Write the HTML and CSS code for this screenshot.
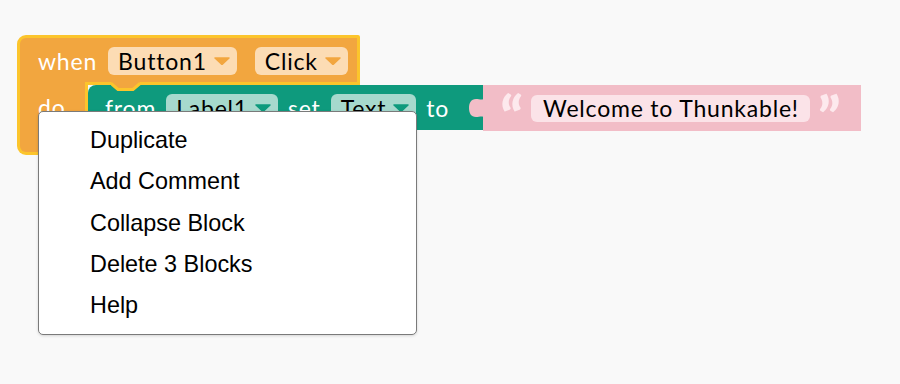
FILE: index.html
```html
<!DOCTYPE html>
<html lang="en">
<head>
    <meta charset="UTF-8">
    <title>Blocks Workspace</title>
    <link rel="stylesheet" href="styles.css">
</head>
<body>
<div class="workspace">

    <!-- event block: when Button1 Click -->
    <div class="event">
        <div class="event-head">
            <span class="label">when</span>
            <span class="pill pill-orange">Button1
                <svg class="caret" width="16" height="8" viewBox="0 0 16 8"><path d="M1 1 H15 L8 7.5 Z" fill="#f2a63f" stroke="#f2a63f" stroke-linejoin="round" stroke-width="1.5"/></svg>
            </span>
            <span class="pill pill-orange pill-click">Click
                <svg class="caret" width="16" height="8" viewBox="0 0 16 8"><path d="M1 1 H15 L8 7.5 Z" fill="#f2a63f" stroke="#f2a63f" stroke-linejoin="round" stroke-width="1.5"/></svg>
            </span>
        </div>
        <div class="event-body">
            <div class="event-do"><span class="label">do</span></div>
            <div class="stack">
                <!-- set block -->
                <div class="set-block">
                    <svg class="notch" width="30" height="10" viewBox="0 0 30 10">
                        <path d="M0 0 L7 7.5 H22 L29 0 Z" fill="#f2a63f"/>
                        <path d="M0 1.5 L7 7.5 H22 L29 1.5" fill="none" stroke="#fcc52c" stroke-width="3"/>
                    </svg>
                    <span class="label">from</span>
                    <span class="pill pill-teal">Label1
                        <svg class="caret" width="16" height="8" viewBox="0 0 16 8"><path d="M1 1 H15 L8 7.5 Z" fill="#0e9a7d" stroke="#0e9a7d" stroke-linejoin="round" stroke-width="1.5"/></svg>
                    </span>
                    <span class="label">set</span>
                    <span class="pill pill-teal">Text
                        <svg class="caret" width="16" height="8" viewBox="0 0 16 8"><path d="M1 1 H15 L8 7.5 Z" fill="#0e9a7d" stroke="#0e9a7d" stroke-linejoin="round" stroke-width="1.5"/></svg>
                    </span>
                    <span class="label">to</span>
                </div>
                <!-- text block -->
                <div class="text-block">
                    <svg class="tab" width="15" height="26" viewBox="0 0 15 26">
                        <path d="M15 0 V2 C15 6 11 4 7 4 C2 4 0 8 0 13 C0 18 2 22 7 22 C11 22 15 20 15 24 V26 Z" fill="#f2bdc7"/>
                    </svg>
                    <span class="quote">&ldquo;</span>
                    <span class="pill pill-pink">Welcome to Thunkable!</span>
                    <span class="quote">&rdquo;</span>
                </div>
            </div>
        </div>
    </div>

    <!-- context menu -->
    <div class="menu">
        <div class="menu-item">Duplicate</div>
        <div class="menu-item">Add Comment</div>
        <div class="menu-item">Collapse Block</div>
        <div class="menu-item">Delete 3 Blocks</div>
        <div class="menu-item">Help</div>
    </div>

</div>
</body>
</html>
```

FILE: styles.css
```css
body {
    margin: 0;
    background-color: #f9f9f9;
    font-family: Lato, "Noto Sans", sans-serif;
}

.workspace {
    position: relative;
    width: 900px;
    height: 384px;
    overflow: hidden;
}

.event {
    position: absolute;
    left: 17px;
    top: 35px;
}

.label {
    color: #fff;
    font-size: 23px;
    letter-spacing: 0.8px;
    line-height: 28px;
}

.event-head {
    display: flex;
    align-items: center;
    box-sizing: border-box;
    width: 343px;
    height: 50px;
    padding: 1px 9px 0 18px;
    background-color: #f2a63f;
    border: 3px solid #fcc52c;
    border-radius: 9px 2px 0 0;
}

.event-head .pill {
    margin-left: 11px;
}

.event-head .pill-click {
    margin-left: 18px;
}

.event-body {
    display: flex;
}

.event-do {
    position: relative;
    box-sizing: border-box;
    width: 71px;
    height: 73px;
    margin-top: -3px;
    padding: 11px 0 0 18px;
    background-color: #f2a63f;
    border: 3px solid #fcc52c;
    border-top: none;
    border-radius: 0 0 0 9px;
}

.stack {
    display: flex;
    align-items: flex-start;
}

.set-block {
    position: relative;
    display: flex;
    align-items: center;
    gap: 10px;
    height: 45px;
    padding: 0 34px 0 17px;
    background-color: #0e9a7d;
    border-radius: 8px 0 0 0;
}

.notch {
    position: absolute;
    left: 23px;
    top: -3px;
}

.text-block {
    position: relative;
    display: flex;
    align-items: center;
    gap: 8px;
    height: 46px;
    padding: 0 20px 0 17px;
    background-color: #f2bdc7;
}

.tab {
    position: absolute;
    left: -14px;
    top: 10px;
}

.quote {
    color: #fde9ed;
    font-size: 58px;
    font-weight: 900;
    line-height: 28px;
    height: 28px;
    margin-top: 15px;
}

.pill {
    display: inline-flex;
    align-items: center;
    gap: 7px;
    height: 28px;
    padding: 0 7px 0 10px;
    border-radius: 6px;
    color: #000;
    font-size: 23px;
    letter-spacing: 0.8px;
}

.pill-orange {
    background-color: #fcdcb4;
}

.pill-teal {
    background-color: #a6d9cd;
}

.pill-pink {
    height: 27px;
    padding: 0 11px 0 12px;
    background-color: #fbe3e8;
}

.caret {
    display: block;
}

.menu {
    position: absolute;
    left: 38px;
    top: 111px;
    box-sizing: border-box;
    width: 379px;
    padding: 8px 0;
    background-color: #fff;
    border: 1px solid #7a7a7a;
    border-radius: 5px;
    box-shadow: 0 1px 3px rgba(0, 0, 0, 0.15);
    font-family: "Liberation Sans", Arial, sans-serif;
}

.menu-item {
    padding-left: 51px;
    font-size: 23.4px;
    line-height: 41.3px;
    color: #000;
}
```
